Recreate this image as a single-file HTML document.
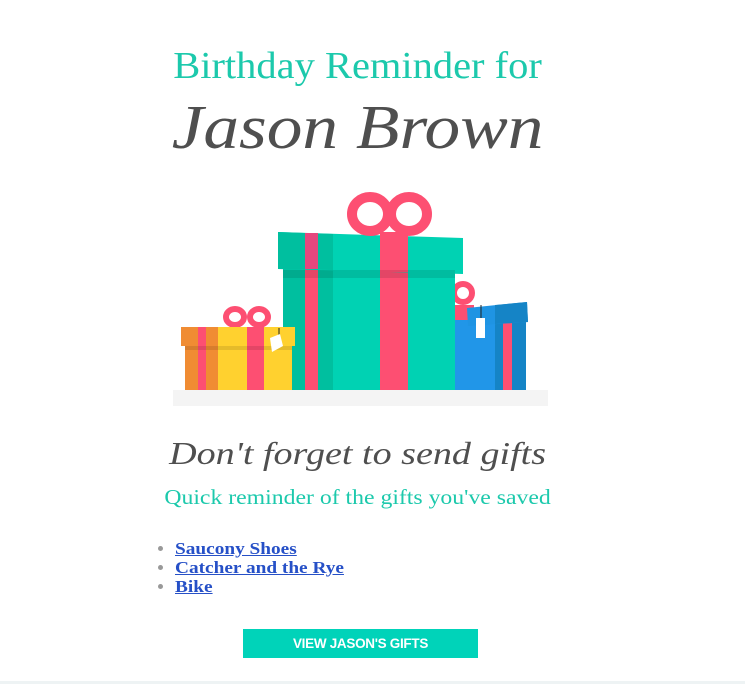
<!DOCTYPE html>
<html><head><meta charset="utf-8"><style>
html,body{margin:0;padding:0;background:#fff;width:745px;height:684px;overflow:hidden;position:relative}
.t{position:absolute;left:0;width:715px;text-align:center;white-space:nowrap;font-family:Georgia,"Liberation Serif",serif;transform-origin:357px 0}
ul{position:absolute;left:158px;top:539px;margin:0;padding:0 0 0 17px;font-family:Georgia,"Liberation Serif",serif;font-weight:bold;font-size:16.5px;line-height:19px;color:#999}
ul li a{color:#2650c7;text-decoration:underline;display:inline-block;transform:scaleX(1.17);transform-origin:0 0}
.btn{position:absolute;left:243px;top:629px;width:235px;height:29px;background:#00d3b9;color:#fff;font-family:"Liberation Sans",Arial,sans-serif;font-size:13.5px;font-weight:bold;line-height:29px;text-align:center;letter-spacing:-0.3px}
</style></head><body>
<div class="t" style="top:44px;font-size:38px;color:#1cc9ac;transform:scaleX(1.065)">Birthday Reminder for</div>
<div class="t" style="top:93px;font-size:62px;color:#4f4f4f;font-style:italic;transform:scaleX(1.15)">Jason Brown</div>
<svg style="position:absolute;left:0;top:0" width="745" height="420">
<rect x="173" y="390" width="375" height="16" fill="#f4f4f4"/>
<circle cx="463" cy="293" r="9" fill="none" stroke="#fd4f72" stroke-width="6"/>
<rect x="452" y="305" width="22" height="85" fill="#fd4f72"/>
<rect x="452" y="320" width="74" height="70" fill="#2196e8"/>
<rect x="495" y="320" width="31" height="70" fill="#1584c6"/>
<rect x="503" y="305" width="9" height="85" fill="#fd4f72"/>
<polygon points="467,308 527,302 528,322 468,326" fill="#1f94e3"/>
<polygon points="495,305 527,302 528,322 495,324" fill="#1584c6"/>
<rect x="476" y="318" width="9" height="20" fill="#fff"/>
<line x1="481" y1="305" x2="481" y2="318" stroke="#222" stroke-width="1"/>
<rect x="283" y="268" width="172" height="122" fill="#00d2b3"/>
<rect x="283" y="268" width="50" height="122" fill="#00bf9f"/>
<rect x="305" y="235" width="13" height="155" fill="#fd4f72"/>
<rect x="380" y="232" width="28" height="158" fill="#fd4f72"/>
<polygon points="278,232 463,238 463,274 278,269" fill="#00d2b3"/>
<polygon points="278,232 333,234 333,270 278,269" fill="#00bf9f"/>
<rect x="305" y="233" width="13" height="36" fill="#e5477e"/>
<rect x="380" y="234" width="28" height="38" fill="#fd4f72"/>
<rect x="283" y="270" width="172" height="8" fill="#000" opacity="0.1"/>
<ellipse cx="370" cy="214" rx="18" ry="17" fill="none" stroke="#fd4f72" stroke-width="10"/>
<ellipse cx="409" cy="214" rx="18" ry="17" fill="none" stroke="#fd4f72" stroke-width="10"/>
<ellipse cx="235" cy="317" rx="9" ry="8" fill="none" stroke="#fd4f72" stroke-width="6"/>
<ellipse cx="259" cy="317" rx="9" ry="8" fill="none" stroke="#fd4f72" stroke-width="6"/>
<rect x="185" y="345" width="107" height="45" fill="#ffd12f"/>
<rect x="185" y="345" width="33" height="45" fill="#f08c33"/>
<rect x="181" y="327" width="114" height="19" fill="#ffd12f"/>
<rect x="181" y="327" width="37" height="19" fill="#f08c33"/>
<rect x="198" y="327" width="8" height="63" fill="#fd4f72"/>
<rect x="247" y="327" width="17" height="63" fill="#fd4f72"/>
<rect x="185" y="346" width="107" height="4" fill="#000" opacity="0.1"/>
<line x1="279" y1="328" x2="279" y2="337" stroke="#222" stroke-width="1"/>
<polygon points="270,338 280,334 283,346 272,352" fill="#fff"/>
</svg>
<div class="t" style="top:435px;font-size:32px;color:#4f4f4f;font-style:italic;transform:scaleX(1.19)">Don't forget to send gifts</div>
<div class="t" style="top:485px;font-size:21px;color:#1cc9ac;transform:scaleX(1.13)">Quick reminder of the gifts you've saved</div>
<ul><li><a>Saucony Shoes</a></li><li><a>Catcher and the Rye</a></li><li><a>Bike</a></li></ul>
<div class="btn">VIEW JASON'S GIFTS</div>
<div style="position:absolute;left:0;top:681px;width:745px;height:3px;background:#eef3f4"></div>
</body></html>
